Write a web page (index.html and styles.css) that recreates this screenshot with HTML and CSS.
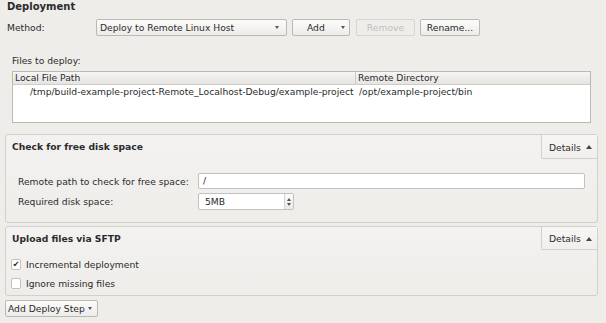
FILE: index.html
```html
<!DOCTYPE html>
<html>
<head>
<meta charset="utf-8">
<link rel="stylesheet" href="styles.css">
</head>
<body>
<div class="page">
  <div class="title">Deployment</div>
  <div class="method-row">
    <span class="method-label">Method:</span>
    <div class="combo"><span>Deploy to Remote Linux Host</span><span class="caret"></span></div>
    <div class="btn btn-add"><span>Add</span><span class="caret"></span></div>
    <div class="btn btn-remove">Remove</div>
    <div class="btn btn-rename">Rename...</div>
  </div>
  <div class="files">
    <div class="files-label">Files to deploy:</div>
    <div class="table">
      <div class="thead">
        <div class="th th-local">Local File Path</div>
        <div class="th th-remote">Remote Directory</div>
      </div>
      <div class="tbody">
        <div class="tr">
          <div class="td td-local">/tmp/build-example-project-Remote_Localhost-Debug/example-project</div>
          <div class="td td-remote">/opt/example-project/bin</div>
        </div>
      </div>
    </div>
  </div>

  <div class="section section-disk">
    <div class="section-head">
      <div class="section-title">Check for free disk space</div>
      <div class="details">Details <span class="up"></span></div>
    </div>
    <div class="section-body form">
      <div class="form-row">
        <span class="form-label">Remote path to check for free space:</span>
        <div class="input input-path">/</div>
      </div>
      <div class="form-row">
        <span class="form-label">Required disk space:</span>
        <div class="spin"><span class="spin-text">5MB</span><span class="spin-btns"><span class="sp-up"></span><span class="sp-down"></span></span></div>
      </div>
    </div>
  </div>

  <div class="section section-sftp">
    <div class="section-head">
      <div class="section-title">Upload files via SFTP</div>
      <div class="details details-2">Details <span class="up"></span></div>
    </div>
    <div class="section-body checks">
      <div class="check-row"><span class="cbox checked">&#x2714;</span><span>Incremental deployment</span></div>
      <div class="check-row"><span class="cbox"></span><span>Ignore missing files</span></div>
    </div>
  </div>

  <div class="btn btn-step"><span>Add Deploy Step</span><span class="caret"></span></div>
</div>
</body>
</html>
```
FILE: styles.css
```css
* { box-sizing: border-box; }
html, body { margin: 0; padding: 0; }
body {
  width: 606px;
  height: 323px;
  overflow: hidden;
  background: #efedea;
  font-family: "DejaVu Sans", sans-serif;
  font-size: 9.2px;
  color: #2b2b2b;
}
.page {
  padding: 1px 9px 0 5px;
  display: flex;
  flex-direction: column;
}
.title {
  margin-left: 2px;
  font-weight: bold;
  font-size: 10px;
  line-height: 12px;
  height: 12px;
}
.method-row {
  margin-top: 6px;
  margin-left: 2px;
  display: flex;
  align-items: center;
  height: 17px;
}
.method-label { width: 89px; }
.combo, .btn {
  height: 17px;
  border: 1px solid #bcb8b3;
  border-radius: 2px;
  background: linear-gradient(#fbfbfa, #eeecea);
  display: flex;
  align-items: center;
  line-height: 15px;
}
.combo {
  width: 191px;
  padding: 0 0 0 3px;
  justify-content: space-between;
}
.combo .caret { margin-right: 7px; }
.caret {
  width: 0; height: 0;
  border-left: 2.5px solid transparent;
  border-right: 2.5px solid transparent;
  border-top: 3px solid #555;
}
.btn-add {
  margin-left: 5px;
  width: 58px;
  padding: 0 4px 0 14px;
  justify-content: space-between;
}
.btn-remove {
  margin-left: 6px;
  width: 59px;
  justify-content: center;
  color: #c2bfbb;
  border-color: #d8d5d1;
  background: #efedea;
}
.btn-rename {
  margin-left: 5px;
  width: 60px;
  justify-content: center;
}
.files {
  margin-left: 7px;
  margin-top: 19px;
}
.files-label {
  line-height: 12px;
  height: 12px;
}
.table {
  margin-top: 4px;
  width: 579px;
  height: 52px;
  border: 1px solid #bcb8b3;
  background: #fff;
}
.thead {
  display: flex;
  height: 13px;
  background: linear-gradient(#f6f5f4, #e6e4e1);
  border-bottom: 1px solid #cfccc8;
  line-height: 12px;
}
.th { padding-left: 2px; }
.th-local { width: 343px; border-right: 1px solid #cfccc8; }
.th-remote { flex: 1; padding-left: 2px; }
.tr { display: flex; line-height: 13px; }
.td-local { width: 344px; padding-left: 17px; white-space: nowrap; }
.td-remote { padding-left: 2px; white-space: nowrap; }

.section {
  border: 1px solid #d3d0cc;
  border-radius: 3px;
  background: linear-gradient(#f4f2f0, #efedea);
  width: 593px;
}
.section-disk { margin-top: 11px; height: 89px; }
.section-sftp { margin-top: 3px; height: 70px; }
.section-head {
  display: flex;
  justify-content: space-between;
  align-items: flex-start;
}
.section-title {
  font-weight: bold;
  padding-left: 6px;
  line-height: 12px;
  margin-top: 6px;
}
.details {
  width: 56px;
  height: 24px;
  border-left: 1px solid #d3d0cc;
  border-bottom: 1px solid #d3d0cc;
  border-bottom-left-radius: 2px;
  background: linear-gradient(#f7f6f5, #f1efed);
  display: flex;
  align-items: center;
  padding-left: 7px;
  gap: 5px;
  padding-top: 1px;
}
.details-2 { height: 23px; }
.up {
  width: 0; height: 0;
  border-left: 3px solid transparent;
  border-right: 3px solid transparent;
  border-bottom: 4px solid #444;
}
.form {
  padding: 14px 0 0 12px;
  display: flex;
  flex-direction: column;
  gap: 4px;
}
.form-row {
  display: flex;
  align-items: center;
}
.form-label { width: 180px; }
.input {
  width: 387px;
  height: 16px;
  border: 1px solid #c4c0bb;
  border-radius: 2px;
  background: #fff;
  padding-left: 4px;
  line-height: 14px;
}
.spin {
  width: 96px;
  height: 17px;
  border: 1px solid #c4c0bb;
  border-radius: 2px;
  background: #fff;
  display: flex;
  justify-content: space-between;
  line-height: 15px;
}
.spin-text { padding-left: 6px; }
.spin-btns {
  width: 9px;
  border-left: 1px solid #d6d3cf;
  background: linear-gradient(#fafafa, #eceae8);
  display: flex;
  flex-direction: column;
  align-items: center;
  justify-content: center;
  gap: 2px;
}
.sp-up {
  width: 0; height: 0;
  border-left: 2px solid transparent;
  border-right: 2px solid transparent;
  border-bottom: 3px solid #555;
}
.sp-down {
  width: 0; height: 0;
  border-left: 2px solid transparent;
  border-right: 2px solid transparent;
  border-top: 3px solid #555;
}
.checks {
  padding: 5px 0 0 5px;
  display: flex;
  flex-direction: column;
}
.check-row {
  display: flex;
  align-items: center;
  height: 19px;
  gap: 5px;
}
.cbox {
  width: 10px;
  height: 11px;
  border: 1px solid #c4c0bb;
  border-radius: 2px;
  background: #fff;
  font-size: 8px;
  line-height: 9px;
  text-align: center;
  color: #222;
}
.btn-step {
  margin-top: 4px;
  width: 93px;
  padding: 0 5px 0 2px;
  justify-content: space-between;
}
```
